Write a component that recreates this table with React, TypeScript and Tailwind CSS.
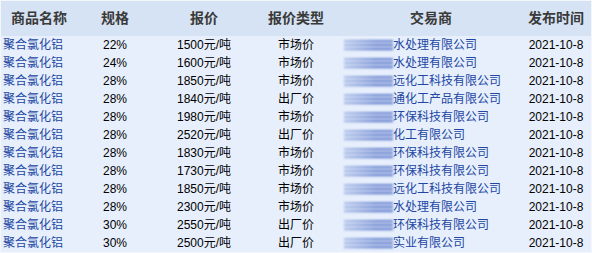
const rows = [
  ["22%", "1500元/吨", "市场价", "水处理有限公司"],
  ["24%", "1600元/吨", "市场价", "水处理有限公司"],
  ["28%", "1850元/吨", "市场价", "远化工科技有限公司"],
  ["28%", "1840元/吨", "出厂价", "通化工产品有限公司"],
  ["28%", "1980元/吨", "市场价", "环保科技有限公司"],
  ["28%", "2520元/吨", "出厂价", "化工有限公司"],
  ["28%", "1830元/吨", "市场价", "环保科技有限公司"],
  ["28%", "1730元/吨", "市场价", "环保科技有限公司"],
  ["28%", "1850元/吨", "市场价", "远化工科技有限公司"],
  ["28%", "2300元/吨", "市场价", "水处理有限公司"],
  ["30%", "2550元/吨", "出厂价", "环保科技有限公司"],
  ["30%", "2500元/吨", "出厂价", "实业有限公司"],
];

const cols = "grid grid-cols-[76px_76px_102px_82px_188px_62px]";

export default function App() {
  return (
    <div className="w-[592px] h-[253px] bg-[#f3f6fb] p-px font-['Liberation_Sans','Noto_Sans_CJK_SC',sans-serif] text-[12px] text-black">
      <div className={`${cols} h-[35px] items-center bg-[#d6e3f4] text-[14px] font-bold text-[#3a3a3a]`}>
        <div className="text-center">商品名称</div>
        <div className="text-center">规格</div>
        <div className="text-center">报价</div>
        <div className="text-center">报价类型</div>
        <div className="text-center">交易商</div>
        <div className="text-center">发布时间</div>
      </div>
      <div className="bg-[#e7effc]">
        {rows.map((r, i) => (
          <div key={i} className={`${cols} h-[18px] items-center leading-[18px]`}>
            <div className="pl-[2px] text-[#2246a3]">聚合氯化铝</div>
            <div className="text-center">{r[0]}</div>
            <div className="text-center">{r[1]}</div>
            <div className="text-center">{r[2]}</div>
            <div className="flex items-center pl-[7px] text-[#2246a3]">
              {/* masked name */}
              <div className="w-[49px] h-[11px] shrink-0 blur-[0.8px] bg-[linear-gradient(90deg,rgba(231,239,252,0.55),rgba(231,239,252,0)_65%),repeating-linear-gradient(180deg,#6a86cf_0px,#6a86cf_2px,#c3d0ef_2px,#c3d0ef_4px)]" />
              <span>{r[3]}</span>
            </div>
            <div className="text-center">2021-10-8</div>
          </div>
        ))}
      </div>
    </div>
  );
}
